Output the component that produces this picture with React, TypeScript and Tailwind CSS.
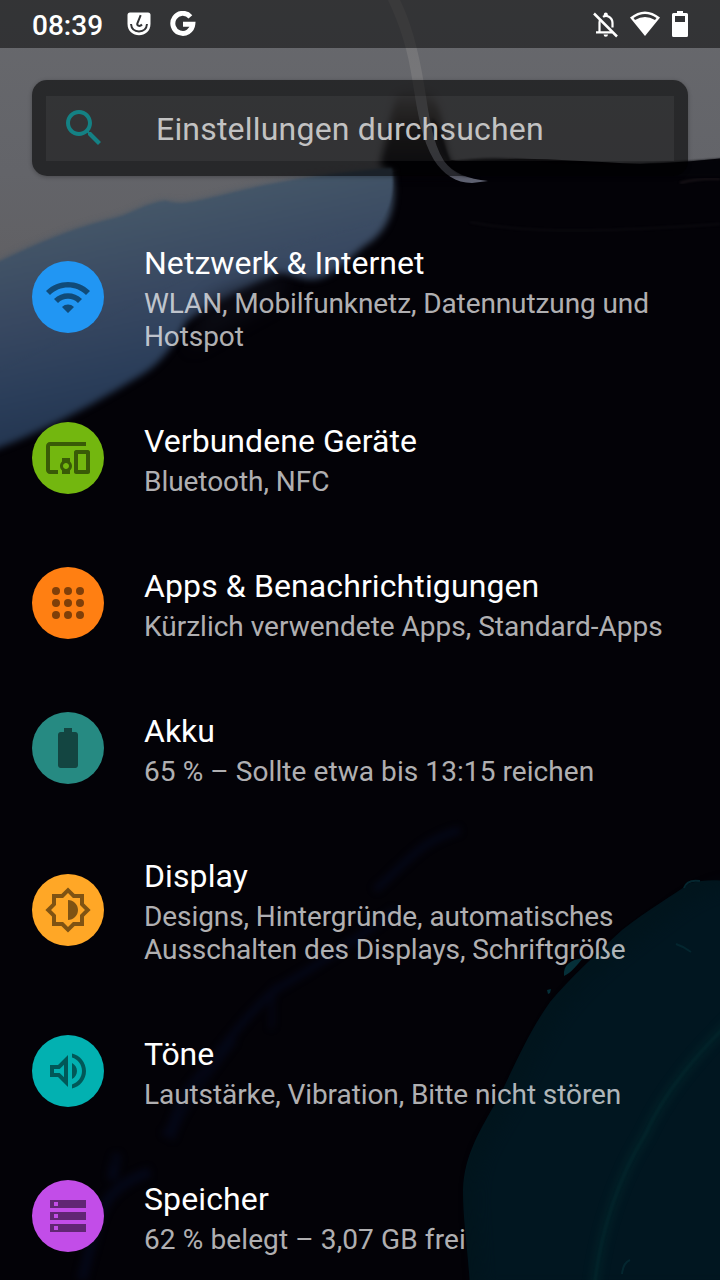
import type { ReactNode } from "react";

type Item = {
  title: string;
  titleTracking?: string;
  summary: string[];
  summaryTracking?: string;
  circle: string;
  icon: ReactNode;
};

const items: Item[] = [
  {
    title: "Netzwerk & Internet",
    titleTracking: "tracking-[0.04px]",
    summary: ["WLAN, Mobilfunknetz, Datennutzung und", "Hotspot"],
    summaryTracking: "tracking-[-0.1px]",
    circle: "bg-[#2196f3]",
    icon: (
      <path d="M1 9l2 2c4.97-4.97 13.03-4.97 18 0l2-2C16.93 2.93 7.08 2.93 1 9zm8 8l3 3 3-3c-1.65-1.66-4.34-1.66-6 0zm-4-4l2 2c2.76-2.76 7.24-2.76 10 0l2-2C15.14 9.14 8.87 9.14 5 13z" />
    ),
  },
  {
    title: "Verbundene Geräte",
    titleTracking: "tracking-[0.05px]",
    summary: ["Bluetooth, NFC"],
    summaryTracking: "tracking-[-0.05px]",
    circle: "bg-[#73b70f]",
    icon: (
      <path d="M3 6h18V4H3c-1.1 0-2 .9-2 2v12c0 1.1.9 2 2 2h4v-2H3V6zm10 6H9v1.78c-.61.55-1 1.33-1 2.22s.39 1.67 1 2.22V20h4v-1.78c.61-.55 1-1.34 1-2.22s-.39-1.67-1-2.22V12zm-2 5.5c-.83 0-1.5-.67-1.5-1.5s.67-1.5 1.5-1.5 1.5.67 1.5 1.5-.67 1.5-1.5 1.5zM22 8h-6c-.5 0-1 .5-1 1v10c0 .5.5 1 1 1h6c.5 0 1-.5 1-1V9c0-.5-.5-1-1-1zm-1 10h-4v-8h4v8z" />
    ),
  },
  {
    title: "Apps & Benachrichtigungen",
    titleTracking: "tracking-[0.11px]",
    summary: ["Kürzlich verwendete Apps, Standard-Apps"],
    circle: "bg-[#ff7f12]",
    icon: [6, 12, 18].map((y) =>
      [6, 12, 18].map((x) => <circle key={`${x}-${y}`} cx={x} cy={y} r={2} />),
    ),
  },
  {
    title: "Akku",
    summary: ["65 % – Sollte etwa bis 13:15 reichen"],
    summaryTracking: "tracking-[0.08px]",
    circle: "bg-[#268a82]",
    icon: (
      <path d="M15.67 4H14V2h-4v2H8.33C7.6 4 7 4.6 7 5.33v15.33C7 21.4 7.6 22 8.33 22h7.33c.74 0 1.34-.6 1.34-1.33V5.33C17 4.6 16.4 4 15.67 4z" />
    ),
  },
  {
    title: "Display",
    titleTracking: "tracking-[0.1px]",
    summary: ["Designs, Hintergründe, automatisches", "Ausschalten des Displays, Schriftgröße"],
    summaryTracking: "tracking-[-0.08px]",
    circle: "bg-[#ffa726]",
    icon: (
      <path d="M20 8.69V4h-4.69L12 .69 8.69 4H4v4.69L.69 12 4 15.31V20h4.69L12 23.31 15.31 20H20v-4.69L23.31 12 20 8.69zm-2 5.79V18h-3.52L12 20.48 9.52 18H6v-3.52L3.52 12 6 9.52V6h3.52L12 3.52 14.48 6H18v3.52L20.48 12 18 14.48zM12 7v10c2.76 0 5-2.24 5-5s-2.24-5-5-5z" />
    ),
  },
  {
    title: "Töne",
    titleTracking: "tracking-[-0.1px]",
    summary: ["Lautstärke, Vibration, Bitte nicht stören"],
    summaryTracking: "tracking-[-0.08px]",
    circle: "bg-[#02b1b1]",
    icon: (
      <path
        fillRule="evenodd"
        d="M3 9v6h4l5 5V4L7 9H3zm7-.17v6.34L7.83 13H5v-2h2.83L10 8.83zM14 7.97v8.05c1.48-.73 2.5-2.25 2.5-4.02 0-1.77-1.02-3.29-2.5-4.03zM14 3.23v2.06c2.89.86 5 3.54 5 6.71s-2.11 5.85-5 6.71v2.06c4.01-.91 7-4.49 7-8.77s-2.99-7.86-7-8.77z"
      />
    ),
  },
  {
    title: "Speicher",
    titleTracking: "tracking-[0.12px]",
    summary: ["62 % belegt – 3,07 GB frei"],
    summaryTracking: "tracking-[0.11px]",
    circle: "bg-[#c24de8]",
    icon: (
      <path
        fillRule="evenodd"
        d="M3 4h18v4H3zM5 5h2v2H5zM3 10h18v4H3zM5 11h2v2H5zM3 16h18v4H3zM5 17h2v2H5z"
      />
    ),
  },
];

function Wallpaper() {
  return (
    <svg className="absolute inset-0 h-[1280px] w-[720px]" viewBox="0 0 720 1280" aria-hidden="true">
      <defs>
        <linearGradient id="haze" x1="0" y1="0" x2="0" y2="1">
          <stop offset="0" stopColor="#68696d" />
          <stop offset="0.6" stopColor="#636469" />
          <stop offset="1" stopColor="#605f62" />
        </linearGradient>
        <linearGradient id="sea" gradientUnits="userSpaceOnUse" x1="170" y1="190" x2="215" y2="400">
          <stop offset="0" stopColor="#465869" />
          <stop offset="0.45" stopColor="#384861" />
          <stop offset="0.8" stopColor="#2a3d59" />
          <stop offset="1" stopColor="#243651" />
        </linearGradient>
        <linearGradient id="burn" gradientUnits="userSpaceOnUse" x1="0" y1="88" x2="0" y2="158">
          <stop offset="0" stopColor="#241c17" stopOpacity="0" />
          <stop offset="0.35" stopColor="#241c17" stopOpacity="0.6" />
          <stop offset="0.7" stopColor="#0e0b0c" stopOpacity="0.9" />
          <stop offset="1" stopColor="#040308" />
        </linearGradient>
        <linearGradient id="ribbon" gradientUnits="userSpaceOnUse" x1="0" y1="0" x2="0" y2="182">
          <stop offset="0" stopColor="#747476" />
          <stop offset="0.6" stopColor="#77777a" />
          <stop offset="1" stopColor="#5f6272" />
        </linearGradient>
        <filter id="soft1" x="-10%" y="-10%" width="120%" height="120%" colorInterpolationFilters="sRGB">
          <feGaussianBlur stdDeviation="1" />
        </filter>
        <filter id="soft3" x="-20%" y="-20%" width="140%" height="140%" colorInterpolationFilters="sRGB">
          <feGaussianBlur stdDeviation="3.5" />
        </filter>
        <filter id="soft8" x="-30%" y="-30%" width="160%" height="160%" colorInterpolationFilters="sRGB">
          <feGaussianBlur stdDeviation="8" />
        </filter>
      </defs>
      <rect width="720" height="1280" fill="#030207" />
      <path
        d="M-20 -20H740V156C705 161 670 163 640 164C590 162 545 158 510 159C485 161 462 162 452 160L393 172L330 230L0 300H-20Z"
        fill="url(#haze)"
      />
      <path d="M396 96C410 86 428 86 436 102C443 118 443 145 450 162L474 178H396L380 165Z" fill="url(#burn)" filter="url(#soft3)" />
      <path
        d="M-20 271C20 252 60 232 108 220C130 216 145 203 166 201C182 207 196 201 220 196C270 183 320 174 392 170C397 200 392 225 372 241C350 255 338 275 316 279C300 281 290 272 278 274C245 288 207 306 186 322C174 346 160 364 140 376C100 400 50 430 -20 455Z"
        fill="url(#sea)"
        filter="url(#soft3)"
      />
      <path
        d="M-20 271C20 252 60 232 108 220C130 216 145 203 166 201C182 207 196 201 220 196C270 183 320 174 392 168C394 190 392 205 380 220L200 270L-20 380Z"
        fill="url(#sea)"
        filter="url(#soft1)"
      />
      <path d="M205 300C230 285 260 277 290 274L280 300L190 350Z" fill="#11131d" opacity="0.5" filter="url(#soft8)" />
      <path
        d="M388 0C400 25 408 50 413 84C418 115 422 140 434 160C443 174 456 183 472 183L488 181C468 179 453 173 444 161C432 142 429 115 424 84C418 48 410 20 400 0Z"
        fill="url(#ribbon)"
      />
      <path d="M432 118C442 128 444 148 451 162C480 157 510 157 550 163C610 166 670 163 740 157V176H465C447 170 437 148 432 118Z" fill="#040409" opacity="0.93" filter="url(#soft1)" />
      <path d="M470 222C540 236 630 230 720 224" fill="none" stroke="#0b0a0f" strokeWidth="2" filter="url(#soft1)" />
      <path d="M680 183Q700 178 720 179" fill="none" stroke="#1a1519" strokeWidth="2" filter="url(#soft1)" />
      <g fill="none" stroke="#050b22" filter="url(#soft3)" opacity="0.6">
        <path d="M460 830C420 840 405 865 375 890M395 910C350 945 310 970 275 990C240 1020 215 1060 195 1080C170 1110 170 1145 165 1130" strokeWidth="7" />
        <path d="M112 1180C115 1160 118 1155 115 1160M150 1172C125 1180 105 1195 98 1220C90 1250 86 1262 82 1280" strokeWidth="10" />
        <path d="M275 985C268 1015 275 1032 270 1025M235 1040C205 1080 180 1110 172 1140" strokeWidth="4" />
      </g>
      <path
        d="M740 882C720 880 705 879 690 883C672 896 650 908 622 930C595 955 570 978 550 1002C530 1030 517 1060 500 1095C480 1130 464 1155 463 1190C463 1225 468 1245 470 1290H740Z"
        fill="#02151d"
      />
      <path
        d="M740 886C700 888 675 915 640 940C600 970 570 1000 555 1025C530 1070 515 1105 495 1135C480 1160 475 1180 477 1215L482 1290H740Z"
        fill="#011620"
        filter="url(#soft8)"
      />
      <path d="M740 1012C700 1050 665 1090 645 1135C620 1175 600 1230 594 1290" fill="none" stroke="#032329" strokeWidth="11" opacity="0.65" filter="url(#soft3)" />
      <path d="M740 1012C700 1050 665 1090 645 1135C620 1175 600 1230 594 1290" fill="none" stroke="#03262c" strokeWidth="2" filter="url(#soft1)" />
      <path d="M564 976C563 965 570 960 583 958C576 966 572 972 564 976ZM547 990l4-1l-1 4l-2 1z" fill="#052f38" />
      <path d="M684 888Q687 879 700 881M676 944l7 3l8 5M622 1274q1-11 8-14" fill="none" stroke="#04262f" strokeWidth="2" />
    </svg>
  );
}

function StatusBar() {
  return (
    <header className="flex h-12 shrink-0 items-center bg-black/50 pl-8 pr-8 text-white">
      <span className="w-[95px] pt-[2px] text-[28px] font-medium leading-[33px]">08:39</span>
      <svg className="h-6 w-6" viewBox="0 0 24 24">
        <path d="M3 .5H21Q23.5.5 23.5 3V12C23.5 19 18 23.3 12 23.3S.5 19 .5 12V3Q.5.5 3 .5Z" fill="#fff" />
        <path d="M4 12C4.500 17 8 19.400 12 19.400S19.500 17 20 12M13.700 3.200L10.300 11.500C9.800 14 13 14.800 15 12.500" fill="none" stroke="#343537" strokeWidth="2" />
      </svg>
      <svg className="ml-[19px] h-[26px] w-[26px]" viewBox="0 0 26 26" fill="none" stroke="#fff" strokeWidth="5">
        <path d="M20.400 5.800A10 10 0 1 0 22.800 13.300H13" />
      </svg>
      <svg className="ml-auto h-7 w-7" viewBox="0 0 28 28" fill="none" stroke="#fff" strokeWidth="2.200">
        <path d="M2 3.500L25 26.500" strokeWidth="2.500" />
        <path d="M4 22.300H20M7.500 22V12.500Q7.500 10.500 8.500 9M11 6.800Q14 4.800 17 6.800Q20.500 9 20.500 13V17.500" />
        <path d="M11.800 5.500V4.500a2 2 0 0 1 4 0V5.500ZM11.600 24.500h4.400a2.200 2.200 0 0 1-4.400 0Z" fill="#fff" stroke="none" />
      </svg>
      <svg className="ml-[10px] h-[26px] w-[30px]" viewBox="0 0 30 26">
        <path d="M0 6.500Q15-5.500 30 6.500L15 25Z" fill="#fff" />
        <path d="M3.500 7Q15-1 26.500 7L25 9Q15 3 5 9Z" fill="#353638" />
      </svg>
      <svg className="ml-3 h-[26px] w-4" viewBox="0 0 16 26">
        <path fillRule="evenodd" fill="#fff" d="M5 0h6v2h3.500Q16 2 16 3.500v21Q16 26 14.500 26h-13Q0 26 0 24.500v-21Q0 2 1.500 2H5ZM3 5v6h10V5Z" />
      </svg>
    </header>
  );
}

function SearchBar() {
  return (
    <div className="mx-8 mt-8 flex h-24 shrink-0 rounded-[15px] bg-black/60 px-[14px] pb-[15px] pt-4 shadow-[0_1px_4px_rgba(0,0,0,0.28)]">
      <div className="flex flex-1 items-center bg-white/5 pl-[14px]">
        <svg className="mb-px h-12 w-12 fill-[#148184]" viewBox="0 0 24 24">
          <path d="M15.500 14h-.79l-.28-.27C15.410 12.590 16 11.110 16 9.500 16 5.910 13.090 3 9.500 3S3 5.910 3 9.500 5.910 16 9.500 16c1.610 0 3.090-.59 4.230-1.570l.27.28v.79l5 4.990L20.490 19l-4.990-5zm-6 0C7.010 14 5 11.990 5 9.500S7.010 5 9.500 5 14 7.010 14 9.500 11.990 14 9.500 14z" />
        </svg>
        <span className="ml-12 whitespace-nowrap text-[32px] leading-[38px] tracking-[0.2px] text-[#c2c2c2]">
          Einstellungen durchsuchen
        </span>
      </div>
    </div>
  );
}

function SettingsRow({ item }: { item: Item }) {
  const height = item.summary.length > 1 ? "h-[178px]" : "h-[145px] pb-px";
  return (
    <li className={`flex shrink-0 items-center px-8 ${height}`}>
      <div className={`flex size-[72px] shrink-0 items-center justify-center rounded-full ${item.circle}`}>
        <svg className="size-12 fill-black/50" viewBox="0 0 24 24">
          {item.icon}
        </svg>
      </div>
      <div className="ml-10 whitespace-nowrap pt-[3px]">
        <h2 className={`text-[32px] leading-[38px] text-white ${item.titleTracking ?? ""}`}>{item.title}</h2>
        <div className={`mt-[5px] text-[28px] leading-[33px] text-white/70 ${item.summaryTracking ?? ""}`}>
          {item.summary.map((line) => (
            <p key={line}>{line}</p>
          ))}
        </div>
      </div>
    </li>
  );
}

export default function App() {
  return (
    <div className="relative h-[1280px] w-[720px] overflow-hidden bg-[#030207] font-['Roboto',sans-serif]">
      <Wallpaper />
      <div className="relative flex h-full flex-col">
        <StatusBar />
        <SearchBar />
        <ul className="mt-8 flex flex-col">
          {items.map((item) => (
            <SettingsRow key={item.title} item={item} />
          ))}
        </ul>
      </div>
    </div>
  );
}
